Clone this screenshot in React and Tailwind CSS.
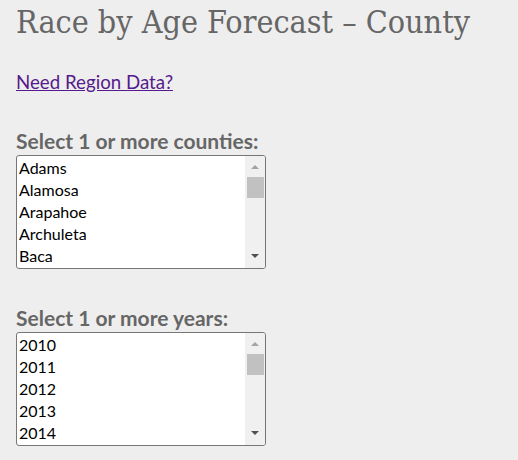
import React from "react";

const counties = ["Adams", "Alamosa", "Arapahoe", "Archuleta", "Baca"];
const years = ["2010", "2011", "2012", "2013", "2014"];

function ListBox({ items }) {
  return (
    <div className="flex w-[250px] h-[114px] border border-[#767676] rounded-[3px] bg-white overflow-hidden">
      <div className="flex-1 pl-[2px] pt-[1px] text-[16px] leading-[22px] text-black font-['Lato',sans-serif]">
        {items.map((item) => (
          <div key={item}>{item}</div>
        ))}
      </div>
      {/* fake scrollbar */}
      <div className="relative w-[20px] bg-[#f0f0f0]">
        <div className="absolute left-[6px] top-[9px] w-0 h-0 border-l-[4px] border-r-[4px] border-b-[4px] border-l-transparent border-r-transparent border-b-[#a3a3a3]" />
        <div className="absolute left-[2px] top-[21px] w-[17px] h-[21px] bg-[#c1c1c1]" />
        <div className="absolute left-[6px] bottom-[10px] w-0 h-0 border-l-[4px] border-r-[4px] border-t-[4px] border-l-transparent border-r-transparent border-t-[#505050]" />
      </div>
    </div>
  );
}

export default function App() {
  return (
    <div className="min-h-screen bg-[#eeeeee] px-4 pt-[2px]">
      <h1 className="text-[32px] leading-[40px] text-[#666666] font-['DejaVu_Serif_Condensed','DejaVu_Serif',serif]">
        Race by Age Forecast – County
      </h1>

      <a
        href="#"
        className="inline-block mt-[28px] text-[18.7px] leading-[24px] text-[#551a8b] underline font-['Lato',sans-serif]"
      >
        Need Region Data?
      </a>

      <div className="mt-[34px]">
        <label className="block mb-[2px] text-[21px] leading-[24px] font-bold text-[#666666] font-['Lato',sans-serif]">
          Select 1 or more counties:
        </label>
        <ListBox items={counties} />
      </div>

      <div className="mt-[37px]">
        <label className="block mb-[2px] text-[21px] leading-[24px] font-bold text-[#666666] font-['Lato',sans-serif]">
          Select 1 or more years:
        </label>
        <ListBox items={years} />
      </div>
    </div>
  );
}
